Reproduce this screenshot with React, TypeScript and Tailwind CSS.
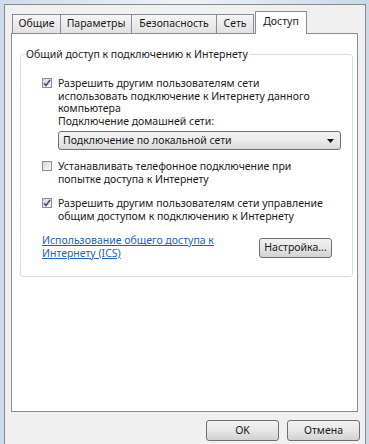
import React from 'react'

const font = { fontFamily: '"Noto Sans", "Open Sans", sans-serif' }

function CheckBox({ checked }: { checked: boolean }) {
  return (
    <div className="mt-[1px] flex h-[10px] w-[10px] shrink-0 items-center justify-center border border-[#8e8f8f] bg-gradient-to-br from-[#d6d6d6] to-[#fbfbfb]">
      {checked && (
        <svg width="8" height="8" viewBox="0 0 8 8">
          <path d="M1 4.2 L3 6.4 L7 1" fill="none" stroke="#3c4f86" strokeWidth="1.6" />
        </svg>
      )}
    </div>
  )
}

function Button({ label, className }: { label: string; className: string }) {
  return (
    <div
      className={`flex items-center justify-center rounded-[3px] border border-[#707070] bg-gradient-to-b from-[#f2f2f2] via-[#e6e6e6] to-[#d2d2d2] text-[10.5px] text-[#1a1a1a] ${className}`}
    >
      {label}
    </div>
  )
}

const tabs = [
  { label: 'Общие', w: 'w-[49px]' },
  { label: 'Параметры', w: 'w-[72px]' },
  { label: 'Безопасность', w: 'w-[86px]' },
  { label: 'Сеть', w: 'w-[38px]' },
]

export default function App() {
  return (
    <div
      className="flex h-[444px] w-[369px] overflow-hidden bg-gradient-to-r from-[#cfdcea] via-[#eef2f6] to-[#c9d9ea] pl-[4px] pr-[3px] pt-[4px]"
      style={font}
    >
      <div className="flex flex-1 flex-col border-l border-r border-t border-[#8a8a8a] bg-[#f0f0f0] text-[10.5px] leading-[12.5px] text-[#1a1a1a]">
        {/* tabs */}
        <div className="ml-[7px] mt-[5px] flex h-[23px] items-end">
          {tabs.map((t) => (
            <div
              key={t.label}
              className={`-mr-px flex h-[19px] items-center justify-center border border-b-0 border-[#898c95] bg-gradient-to-b from-[#f5f5f5] to-[#e2e2e2] pb-[1px] ${t.w}`}
            >
              {t.label}
            </div>
          ))}
          <div className="relative z-10 -mb-px ml-[2px] flex h-[23px] w-[52px] items-start justify-center border border-b-0 border-[#898c95] bg-white pt-[3px]">
            Доступ
          </div>
        </div>

        {/* tab page */}
        <div className="ml-[6px] mr-[7px] h-[379px] border border-[#898c95] bg-white">
          <div className="relative ml-[8px] mr-[4px] mt-[20px] h-[223px] rounded-[3px] border border-[#d5dfe5] pl-[21px] pr-[11px] pt-[22px]">
            <div className="absolute -top-[7px] left-[4px] bg-white px-[1px]">
              Общий доступ к подключению к Интернету
            </div>

            <div className="flex gap-[6px]">
              <CheckBox checked />
              <div className="flex-1">
                <div>
                  Разрешить другим пользователям сети
                  <br />
                  использовать подключение к Интернету данного
                  <br />
                  компьютера
                </div>
                <div>Подключение домашней сети:</div>
                <div className="mt-[4px] flex h-[19px] items-center justify-between rounded-[3px] border border-[#707070] bg-gradient-to-b from-[#f3f3f3] via-[#ebebeb] to-[#d9d9d9] pl-[4px] pr-[6px]">
                  <span>Подключение по локальной сети</span>
                  <svg width="7" height="4" viewBox="0 0 7 4">
                    <path d="M0 0 H7 L3.5 4 Z" fill="#111" />
                  </svg>
                </div>
              </div>
            </div>

            <div className="mt-[10px] flex gap-[6px]">
              <CheckBox checked={false} />
              <div>
                Устанавливать телефонное подключение при
                <br />
                попытке доступа к Интернету
              </div>
            </div>

            <div className="mt-[12px] flex gap-[6px]">
              <CheckBox checked />
              <div>
                Разрешить другим пользователям сети управление
                <br />
                общим доступом к подключению к Интернету
              </div>
            </div>

            <div className="mr-[9px] mt-[12px] flex items-center justify-between">
              <div className="text-[#1c62b9] underline">
                Использование общего доступа к
                <br />
                Интернету (ICS)
              </div>
              <Button label="Настройка..." className="mt-[2px] h-[20px] w-[73px]" />
            </div>
          </div>
        </div>

        {/* bottom buttons */}
        <div className="mr-[5px] mt-[8px] flex justify-end gap-[8px]">
          <Button label="OK" className="h-[21px] w-[73px]" />
          <Button label="Отмена" className="h-[21px] w-[73px]" />
        </div>
      </div>
    </div>
  )
}
